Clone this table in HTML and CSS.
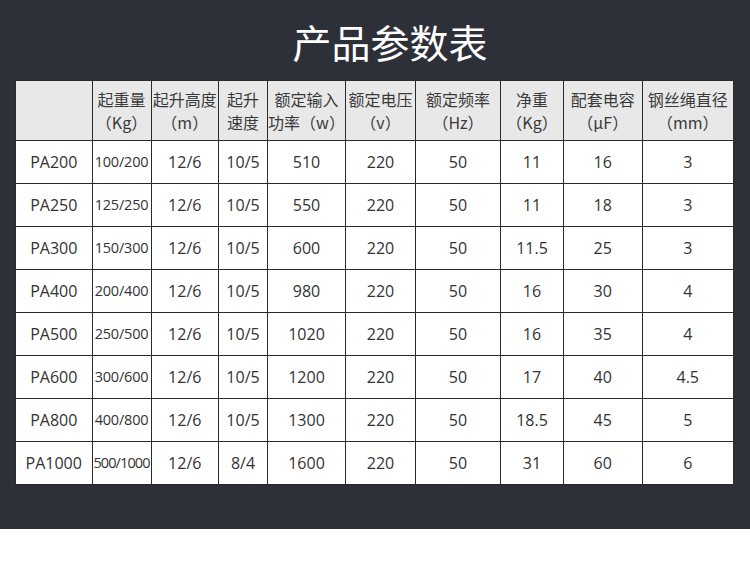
FILE: index.html
```html
<!DOCTYPE html>
<html lang="zh-CN">
<head>
<meta charset="utf-8">
<title>产品参数表</title>
<link rel="stylesheet" href="styles.css">
</head>
<body>
<div class="panel">
  <h1 class="title">产品参数表</h1>
  <table class="spec">
    <colgroup>
      <col class="c1"><col class="c2"><col class="c3"><col class="c4"><col class="c5">
      <col class="c6"><col class="c7"><col class="c8"><col class="c9"><col class="c10">
    </colgroup>
    <thead>
      <tr>
        <th></th>
        <th>起重量<br>（Kg）</th>
        <th>起升高度<br>（m）</th>
        <th>起升<br>速度</th>
        <th>额定输入<br>功率（w）</th>
        <th>额定电压<br>（v）</th>
        <th>额定频率<br>（Hz）</th>
        <th>净重<br>（Kg）</th>
        <th>配套电容<br>（μF）</th>
        <th>钢丝绳直径<br>（mm）</th>
      </tr>
    </thead>
    <tbody>
      <tr><td>PA200</td><td class="load">100/200</td><td>12/6</td><td>10/5</td><td>510</td><td>220</td><td>50</td><td>11</td><td>16</td><td>3</td></tr>
      <tr><td>PA250</td><td class="load">125/250</td><td>12/6</td><td>10/5</td><td>550</td><td>220</td><td>50</td><td>11</td><td>18</td><td>3</td></tr>
      <tr><td>PA300</td><td class="load">150/300</td><td>12/6</td><td>10/5</td><td>600</td><td>220</td><td>50</td><td>11.5</td><td>25</td><td>3</td></tr>
      <tr><td>PA400</td><td class="load">200/400</td><td>12/6</td><td>10/5</td><td>980</td><td>220</td><td>50</td><td>16</td><td>30</td><td>4</td></tr>
      <tr><td>PA500</td><td class="load">250/500</td><td>12/6</td><td>10/5</td><td>1020</td><td>220</td><td>50</td><td>16</td><td>35</td><td>4</td></tr>
      <tr><td>PA600</td><td class="load">300/600</td><td>12/6</td><td>10/5</td><td>1200</td><td>220</td><td>50</td><td>17</td><td>40</td><td>4.5</td></tr>
      <tr><td>PA800</td><td class="load">400/800</td><td>12/6</td><td>10/5</td><td>1300</td><td>220</td><td>50</td><td>18.5</td><td>45</td><td>5</td></tr>
      <tr><td>PA1000</td><td class="load tight">500/1000</td><td>12/6</td><td>8/4</td><td>1600</td><td>220</td><td>50</td><td>31</td><td>60</td><td>6</td></tr>
    </tbody>
  </table>
</div>
</body>
</html>
```

FILE: styles.css
```css
html, body {
  margin: 0;
  padding: 0;
  background: #ffffff;
}

body {
  font-family: "Noto Sans CJK SC", "Noto Sans", sans-serif;
  color: #333333;
}

.panel {
  background: #2d3038;
  height: 529px;
  box-sizing: border-box;
  padding: 0 17px 0 15px;
  overflow: hidden;
}

.title {
  margin: 0;
  height: 80px;
  line-height: 82px;
  font-size: 39px;
  font-weight: 400;
  color: #ffffff;
  text-align: center;
  padding-left: 32px;
  letter-spacing: 0;
}

.spec {
  width: 718px;
  table-layout: fixed;
  border-collapse: collapse;
  background: #ffffff;
}

.c1 { width: 76.5px; }
.c2 { width: 59px; }
.c3 { width: 67.5px; }
.c4 { width: 49px; }
.c5 { width: 78px; }
.c6 { width: 70px; }
.c7 { width: 85px; }
.c8 { width: 63px; }
.c9 { width: 78.5px; }
.c10 { width: 91.5px; }

.spec th,
.spec td {
  border: 1px solid #2a2a2a;
  padding: 0;
  text-align: center;
  white-space: nowrap;
}

.spec th {
  background: #e8e8e8;
  height: 58px;
  font-size: 16px;
  font-weight: 400;
  line-height: 23px;
  color: #3a3a3a;
  padding-top: 1px;
}

.spec td {
  height: 42px;
  font-size: 16px;
  line-height: 20px;
  color: #333333;
  font-family: "Open Sans", "Noto Sans CJK SC", sans-serif;
  font-weight: 400;
}

.spec td.load {
  font-size: 14.5px;
  letter-spacing: -0.2px;
}

.spec td.tight {
  letter-spacing: -0.9px;
}
```
